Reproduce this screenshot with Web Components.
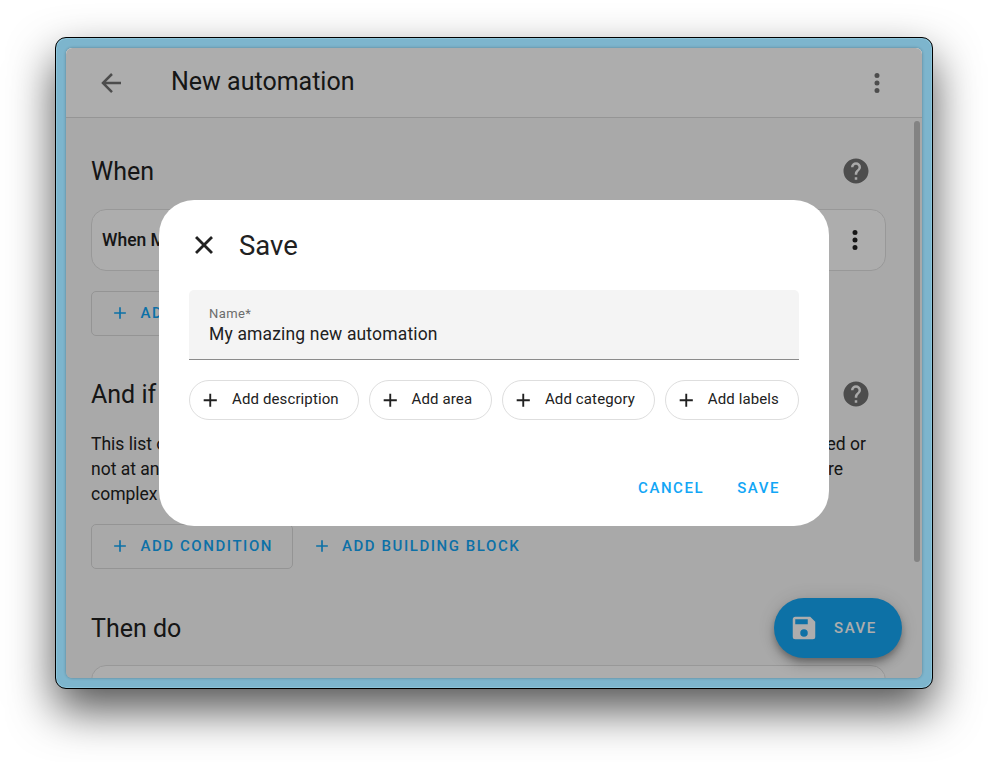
<!DOCTYPE html>
<html lang="en">
<head>
<meta charset="utf-8">
<title>New automation</title>
<style>
body{margin:0;height:762px;display:flex;background:#fff;font-family:Roboto,sans-serif;color:#212121;overflow:hidden}
</style>
</head>
<body>
<desktop-window></desktop-window>
<script>
const ICONS={
 back:'M20,11V13H8L13.5,18.5L12.08,19.92L4.16,12L12.08,4.08L13.5,5.5L8,11H20Z',
 dots:'M12,16A2,2 0 0,1 14,18A2,2 0 0,1 12,20A2,2 0 0,1 10,18A2,2 0 0,1 12,16M12,10A2,2 0 0,1 14,12A2,2 0 0,1 12,14A2,2 0 0,1 10,12A2,2 0 0,1 12,10M12,4A2,2 0 0,1 14,6A2,2 0 0,1 12,8A2,2 0 0,1 10,6A2,2 0 0,1 12,4Z',
 help:'M15.07,11.25L14.17,12.17C13.45,12.89 13,13.5 13,15H11V14.5C11,13.39 11.45,12.39 12.17,11.67L13.41,10.41C13.78,10.05 14,9.55 14,9C14,7.89 13.1,7 12,7A2,2 0 0,0 10,9H8A4,4 0 0,1 12,5A4,4 0 0,1 16,9C16,9.88 15.64,10.67 15.07,11.25M13,19H11V17H13M12,2A10,10 0 0,0 2,12A10,10 0 0,0 12,22A10,10 0 0,0 22,12C22,6.47 17.5,2 12,2Z',
 plus:'M19,13H13V19H11V13H5V11H11V5H13V11H19V13Z',
 close:'M19,6.41L17.59,5L12,10.59L6.41,5L5,6.41L10.59,12L5,17.59L6.41,19L12,13.41L17.59,19L19,17.59L13.41,12L19,6.41Z',
 save:'M15,9H5V5H15M12,19A3,3 0 0,1 9,16A3,3 0 0,1 12,13A3,3 0 0,1 15,16A3,3 0 0,1 12,19M17,3H5C3.89,3 3,3.9 3,5V19A2,2 0 0,0 5,21H19A2,2 0 0,0 21,19V7L17,3Z'
};
const define=(name,render)=>customElements.define(name,class extends HTMLElement{
  constructor(){super();this.attachShadow({mode:'open'})}
  connectedCallback(){this.shadowRoot.innerHTML=render(this)}
});

define('ui-icon',el=>`<style>
:host{display:block;flex:none;width:var(--size,30px);height:var(--size,30px)}
svg{display:block;width:100%;height:100%;fill:currentColor;stroke:currentColor;stroke-width:var(--weight,0)}</style>
<svg viewBox="0 0 24 24"><path d="${ICONS[el.getAttribute('name')]}"/></svg>`);

define('section-heading',el=>`<style>
:host{display:flex;align-items:center;justify-content:space-between;height:60px;padding-right:15px;font-size:25px;line-height:30px}
span{margin-top:2px}
ui-icon{color:#727272}</style>
<span><slot></slot></span>${el.hasAttribute('help')?'<ui-icon name="help"></ui-icon>':''}`);

define('text-button',el=>`<style>
:host{display:flex;align-items:center;box-sizing:border-box;height:45px;padding:0 18.5px 0 18px;color:#12a6f6;
font-size:15px;font-weight:500;letter-spacing:1.56px;text-transform:uppercase;border:1px solid transparent;border-radius:5px;white-space:nowrap}
:host([outlined]){border-color:#dadada}
ui-icon{--size:20px;margin:-1px 10.5px 0 0}
span{margin-top:-2px}</style>
${el.hasAttribute('icon')?'<ui-icon name="plus"></ui-icon>':''}<span><slot></slot></span>`);

define('add-chip',()=>`<style>
:host{display:flex;align-items:center;box-sizing:border-box;height:40px;border:1px solid #dedede;border-radius:20px;padding:0 19px 0 9px;font-size:15px;letter-spacing:.12px;white-space:nowrap}
ui-icon{--size:22.5px;margin-right:10.5px}
span{margin-top:-3px}</style>
<ui-icon name="plus"></ui-icon><span><slot></slot></span>`);

define('automation-card',el=>`<style>
:host{display:flex;align-items:center;justify-content:space-between;box-sizing:border-box;height:62px;background:#fff;border:1px solid #e0e0e0;border-radius:15px;padding:0 15px 0 10px;font-size:17.5px;font-weight:500}
</style><span><slot></slot></span><ui-icon name="dots"></ui-icon>`);

define('app-header',()=>`<style>
:host{display:flex;flex:none;align-items:center;height:69px;background:#fff;border-bottom:1px solid #dcdcdc;padding:0 30px;color:#727272}
span{flex:1;margin:-1px 0 0 45px;color:#212121;font-size:25px;line-height:30px}
</style><ui-icon name="back"></ui-icon><span><slot></slot></span><ui-icon name="dots"></ui-icon>`);

define('save-fab',()=>`<style>
:host{display:flex;align-items:center;box-sizing:border-box;width:128px;height:60px;border-radius:30px;padding:0 0 0 15px;background:#14a7f5;color:#fff;font-size:15px;font-weight:500;letter-spacing:1.56px;
box-shadow:0 4px 6px -1px rgba(0,0,0,.25),0 7px 12px rgba(0,0,0,.16),0 1px 22px rgba(0,0,0,.12)}
ui-icon{margin-right:15px}</style><ui-icon name="save"></ui-icon><slot></slot>`);

define('name-field',()=>`<style>
:host{display:flex;flex-direction:column;box-sizing:border-box;height:70px;padding:15px 20px 0;background:#f4f4f4;border-bottom:1px solid #8b8b8b;border-radius:5px 5px 0 0}
label{font-size:13px;line-height:17px;color:#6c6c6c;letter-spacing:.4px}
.v{font-size:17.5px;line-height:24px;letter-spacing:.16px}</style>
<label><slot name="label"></slot></label><div class="v"><slot></slot></div>`);

define('save-dialog',()=>`<style>
:host{display:flex;flex-direction:column;box-sizing:border-box;width:670px;height:326px;padding:0 30px;background:#fff;border-radius:35px}
header{display:flex;align-items:center;height:90px;gap:20px;font-size:27.5px}
header ui-icon{--weight:.3}
.chips{display:flex;justify-content:space-between;margin-top:20px}
footer{display:flex;justify-content:flex-end;margin-top:46px;gap:11px;padding-right:8px}
footer text-button{padding:0 10px}
</style>
<header><ui-icon name="close"></ui-icon><span>Save</span></header>
<name-field><span slot="label">Name*</span>My amazing new automation</name-field>
<div class="chips"><add-chip>Add description</add-chip><add-chip>Add area</add-chip><add-chip>Add category</add-chip><add-chip>Add labels</add-chip></div>
<footer><text-button>Cancel</text-button><text-button>Save</text-button></footer>`);

define('automation-editor',()=>`<style>
:host{display:flex;flex-direction:column;position:relative;width:856px;height:630px;overflow:hidden;border-radius:6px;background:#fafafa;box-shadow:0 0 3px rgba(0,0,0,.3)}
main{flex:none;display:flex;flex-direction:column;padding:23px 36px 0 25px}
.row{display:flex}
.first{margin-top:8px}
.trigger{margin-top:20px}
.cond{margin-top:28px}
.text{margin:8px 0 17px;font-size:17.5px;line-height:25px;white-space:nowrap}
.text div{display:flex;justify-content:space-between}
.a{width:775px}.b{width:752px}
.then{margin-top:29px}
.next{margin-top:7px}
.scroll{position:absolute;right:2px;top:73px;width:6px;height:441px;border-radius:3px;background:#c1c1c1}
save-fab{position:absolute;right:20px;bottom:20px}
.scrim{position:absolute;inset:0;background:rgba(0,0,0,.32)}
save-dialog{position:absolute;left:93px;top:152px}
</style>
<app-header>New automation</app-header>
<main>
<section-heading help>When</section-heading>
<automation-card class="first">When M</automation-card>
<div class="row trigger"><text-button icon outlined>Add</text-button></div>
<section-heading help class="cond">And if</section-heading>
<div class="text"><div class="a"><span>This list o</span><span>ed or</span></div>
<div class="b"><span>not at an</span><span>re</span></div>
<div><span>complex</span></div></div>
<div class="row"><text-button icon outlined>Add condition</text-button><text-button icon>Add building block</text-button></div>
<section-heading class="then">Then do</section-heading>
<automation-card class="next"></automation-card>
</main>
<div class="scroll"></div>
<save-fab>SAVE</save-fab>
<div class="scrim"></div>
<save-dialog></save-dialog>`);

define('desktop-window',()=>`<style>
:host{display:block;flex:none;box-sizing:border-box;width:878px;height:652px;margin:37px 0 0 55px;padding:10px;border:1px solid #000;border-radius:11px;background:#7db5cd;box-shadow:inset 0 0 0 1px #8cc4da,0 21px 46px rgba(0,0,0,.68)}
</style><automation-editor></automation-editor>`);
</script>
</body>
</html>
